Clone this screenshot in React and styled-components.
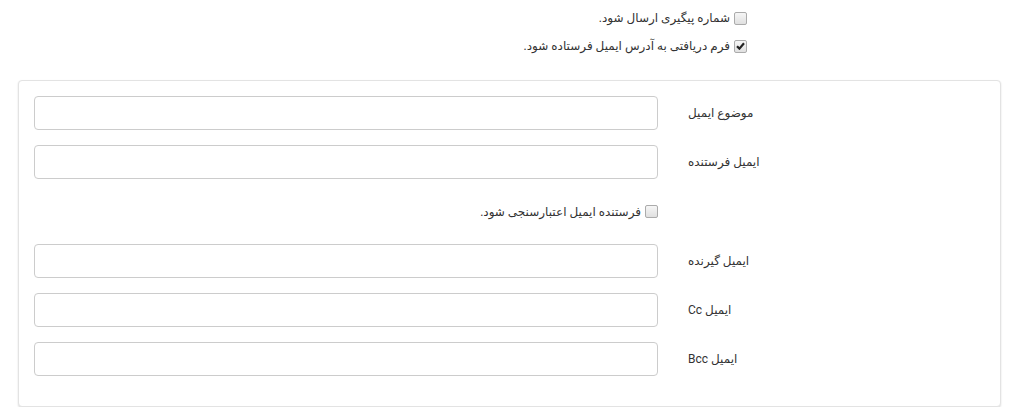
import React from "react";
import styled, { createGlobalStyle } from "styled-components";

const Global = createGlobalStyle`
  html, body { margin: 0; padding: 0; background: #fff; }
  body { font-family: Roboto, "DejaVu Sans", sans-serif; font-size: 12px; color: #333; }
  * { box-sizing: border-box; }
`;

const Page = styled.div`
  direction: rtl;
  padding: 0 14px 0 18px;
`;

const TopOptions = styled.div`
  display: flex;
  flex-direction: column;
  padding: 4px 254px 0 0;
  margin-bottom: 20px;
`;

const CheckRow = styled.label`
  display: flex;
  align-items: center;
  gap: 4px;
  height: 28px;
  line-height: 28px;
  font-size: 12px;
  color: #333;
  cursor: pointer;
`;

const Box = styled.span`
  width: 13px;
  height: 13px;
  flex: 0 0 13px;
  border: 1px solid #ababab;
  border-radius: 2px;
  background: linear-gradient(#f6f6f6, #e0e0e0);
  display: flex;
  align-items: center;
  justify-content: center;
`;

const Panel = styled.div`
  border: 1px solid #e3e3e3;
  border-radius: 4px;
  box-shadow: 0 1px 2px rgba(0, 0, 0, 0.14);
  padding: 15px 0;
  background: #fff;
`;

const FormGroup = styled.div`
  display: grid;
  grid-template-columns: 327px 1fr;
  align-items: center;
  margin-bottom: 15px;
`;

const Label = styled.div`
  padding: 0 15px;
  text-align: left;
  font-size: 12px;
  color: #333;
`;

const InputCol = styled.div`
  padding: 0 15px;
`;

const Input = styled.input`
  display: block;
  width: 100%;
  height: 34px;
  border: 1px solid #cccccc;
  border-radius: 4px;
  background: #fff;
  padding: 6px 12px;
  font-size: 12px;
  outline: none;
`;

const CheckGroup = styled.div`
  display: grid;
  grid-template-columns: 327px 1fr;
  height: 35px;
  align-items: center;
  margin-bottom: 15px;
`;

const Check = ({ checked }) => (
  <Box>
    {checked && (
      <svg width="9" height="8" viewBox="0 0 9 8">
        <path d="M1 4.2 L3.4 6.6 L8 1.2" fill="none" stroke="#222" strokeWidth="2.2" />
      </svg>
    )}
  </Box>
);

const Field = ({ label }) => (
  <FormGroup>
    <Label>{label}</Label>
    <InputCol>
      <Input type="text" />
    </InputCol>
  </FormGroup>
);

export default function App() {
  return (
    <>
      <Global />
      <Page>
        <TopOptions>
          <CheckRow>
            <Check />
            شماره پیگیری ارسال شود.
          </CheckRow>
          <CheckRow>
            <Check checked />
            فرم دریافتی به آدرس ایمیل فرستاده شود.
          </CheckRow>
        </TopOptions>
        <Panel>
          <Field label="موضوع ایمیل" />
          <Field label="ایمیل فرستنده" />
          <CheckGroup>
            <span />
            <InputCol>
              <CheckRow>
                <Check />
                فرستنده ایمیل اعتبارسنجی شود.
              </CheckRow>
            </InputCol>
          </CheckGroup>
          <Field label="ایمیل گیرنده" />
          <Field label="ایمیل Cc" />
          <Field label="ایمیل Bcc" />
        </Panel>
      </Page>
    </>
  );
}
